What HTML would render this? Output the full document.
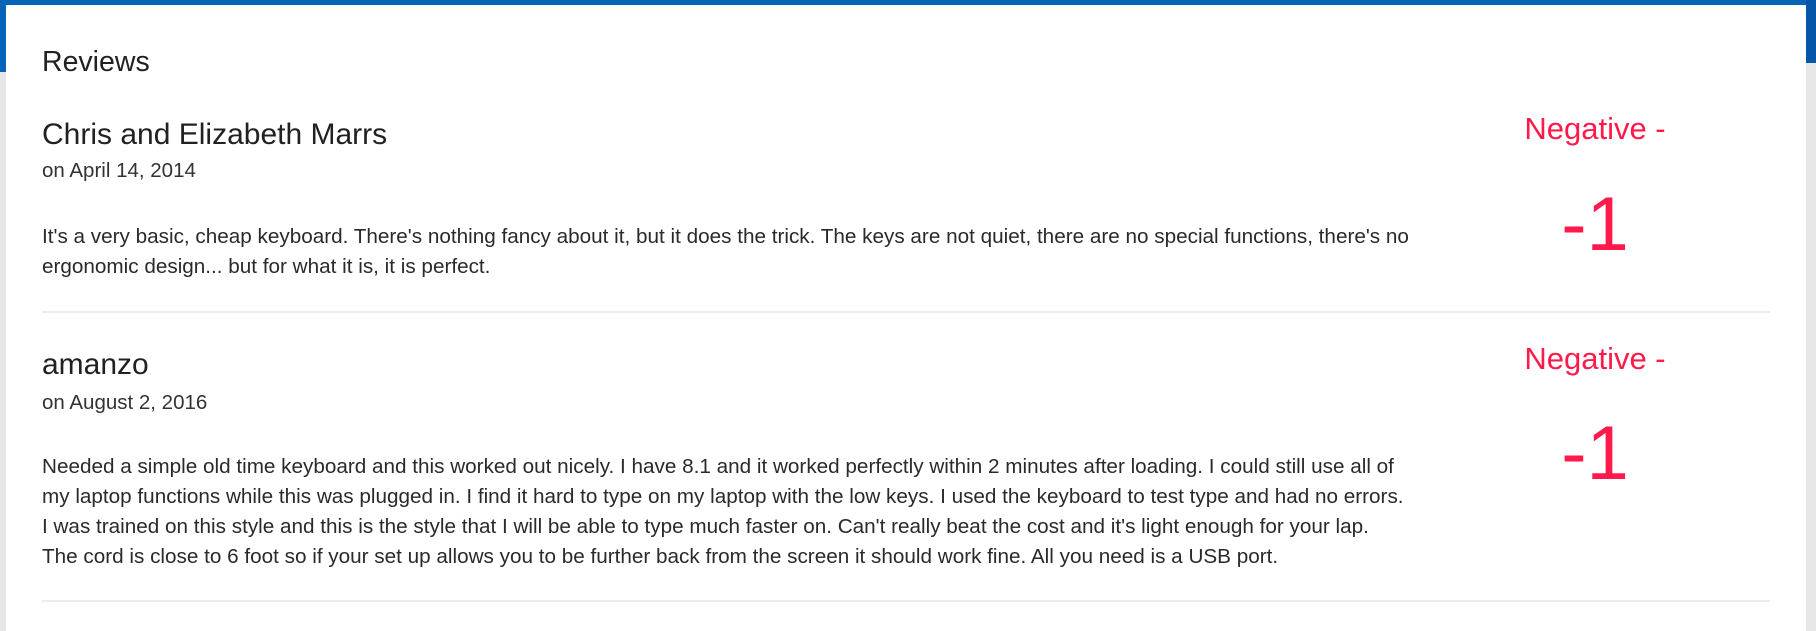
<!DOCTYPE html>
<html><head><meta charset="utf-8"><style>
html,body{margin:0;padding:0;width:1816px;height:631px;overflow:hidden;background:#e6e6e6;font-family:"Liberation Sans",sans-serif;color:#212121}
.top{position:absolute;left:0;top:0;width:1816px;height:5px;background:#0563b8}
.lb{position:absolute;left:0;top:0;width:6px;height:72px;background:#0563b8}
.rb{position:absolute;right:0;top:0;width:10px;height:63px;background:#0556a8}
.card{position:absolute;left:6px;top:5px;width:1800px;height:626px;background:#fff}
.a{position:absolute;white-space:nowrap}
.title{left:36px;top:41px;font-size:28.5px}
.name{left:36px;font-size:30px}
.date{left:36px;font-size:20.5px;color:#333}
.body{left:36px;font-size:20.7px;line-height:30px;color:#2a2a2a}
.hr{position:absolute;left:36px;width:1728px;height:2px;background:#ececec}
.neg{font-size:31px;color:#ff1a4b;width:300px;text-align:center;left:1439px}
.num{font-size:76px;color:#ff1a4b;width:300px;text-align:center;left:1439px}
</style></head><body>
<div class="top"></div><div class="lb"></div><div class="rb"></div>
<div class="card">
<div class="a title">Reviews</div>
<div class="a name" style="top:113px">Chris and Elizabeth Marrs</div>
<div class="a date" style="top:154px">on April 14, 2014</div>
<div class="a body" style="top:217px">It's a very basic, cheap keyboard. There's nothing fancy about it, but it does the trick. The keys are not quiet, there are no special functions, there's no<br>ergonomic design... but for what it is, it is perfect.</div>
<div class="hr" style="top:306px"></div>
<div class="a neg" style="top:106px">Negative -</div>
<div class="a num" style="top:176px">-1</div>
<div class="a name" style="top:343px">amanzo</div>
<div class="a date" style="top:386px">on August 2, 2016</div>
<div class="a body" style="top:447px">Needed a simple old time keyboard and this worked out nicely. I have 8.1 and it worked perfectly within 2 minutes after loading. I could still use all of<br>my laptop functions while this was plugged in. I find it hard to type on my laptop with the low keys. I used the keyboard to test type and had no errors.<br>I was trained on this style and this is the style that I will be able to type much faster on. Can't really beat the cost and it's light enough for your lap.<br>The cord is close to 6 foot so if your set up allows you to be further back from the screen it should work fine. All you need is a USB port.</div>
<div class="hr" style="top:595px"></div>
<div class="a neg" style="top:336px">Negative -</div>
<div class="a num" style="top:405px">-1</div>
</div>
</body></html>
